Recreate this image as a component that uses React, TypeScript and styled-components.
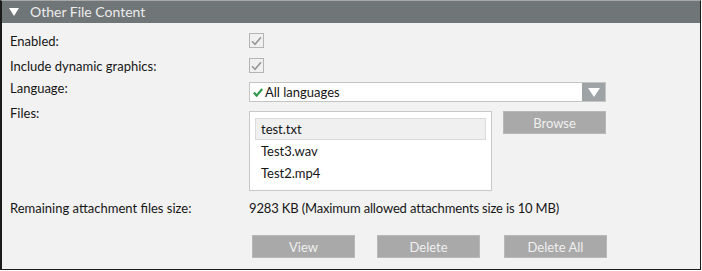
import React from 'react';
import styled, { createGlobalStyle } from 'styled-components';

const GlobalStyle = createGlobalStyle`
  html, body {
    margin: 0;
    padding: 0;
    background: #ffffff;
  }
  body {
    font-family: Lato, "Open Sans", "Liberation Sans", sans-serif;
    font-size: 13px;
    color: #161616;
  }
`;

const files = ['test.txt', 'Test3.wav', 'Test2.mp4'];

export default function App() {
  return (
    <>
      <GlobalStyle />
      <Panel>
        <Header>
          <svg width="10" height="8" viewBox="0 0 10 8">
            <polygon points="0,0 10,0 5,8" fill="#ffffff" />
          </svg>
          <HeaderTitle>Other File Content</HeaderTitle>
        </Header>
        <Body>
          <Row $top={9}>
            <Label>Enabled:</Label>
            <CheckBox>
              <CheckMark />
            </CheckBox>
          </Row>
          <Row $top={7}>
            <Label>Include dynamic graphics:</Label>
            <CheckBox>
              <CheckMark />
            </CheckBox>
          </Row>
          <Row $top={4}>
            <Label>Language:</Label>
            <Select>
              <SelectValue>
                <svg width="10" height="9" viewBox="0 0 10 9">
                  <path d="M0.8 4.6 L3.6 7.6 L9.2 1" stroke="#2f9a4c" strokeWidth="2.2" fill="none" />
                </svg>
                All languages
              </SelectValue>
              <SelectArrow>
                <svg width="12" height="9" viewBox="0 0 12 9">
                  <polygon points="0,0 12,0 6,9" fill="#ffffff" />
                </svg>
              </SelectArrow>
            </Select>
          </Row>
          <Row $top={2}>
            <Label>Files:</Label>
            <FilesArea>
              <FileList>
                {files.map((f, i) => (
                  <FileItem key={f} $selected={i === 0}>
                    {f}
                  </FileItem>
                ))}
              </FileList>
              <GrayButton>Browse</GrayButton>
            </FilesArea>
          </Row>
          <Row $top={8}>
            <Label>Remaining attachment files size:</Label>
            <Value>9283 KB (Maximum allowed attachments size is 10 MB)</Value>
          </Row>
          <ButtonRow>
            <GrayButton>View</GrayButton>
            <GrayButton>Delete</GrayButton>
            <GrayButton $gap={24}>Delete All</GrayButton>
          </ButtonRow>
        </Body>
      </Panel>
    </>
  );
}

function CheckMark() {
  return (
    <svg width="11" height="10" viewBox="0 0 11 10">
      <path d="M1 5.2 L4 8.2 L10 1.2" stroke="#979797" strokeWidth="1.6" fill="none" />
    </svg>
  );
}

const Panel = styled.div`
  width: 701px;
  height: 270px;
  box-sizing: border-box;
  background: #f2f2f2;
  border: 1px solid #1a1a1a;
  border-top: 1px solid #a8a8a8;
  border-left-width: 2px;
  display: flex;
  flex-direction: column;
`;

const Header = styled.div`
  height: 22px;
  background: #707577;
  display: flex;
  align-items: center;
  padding-left: 7px;
  gap: 11px;
  flex-shrink: 0;
`;

const HeaderTitle = styled.span`
  color: #ececec;
  font-size: 14px;
  line-height: 22px;
`;

const Body = styled.div`
  padding-left: 8px;
  display: flex;
  flex-direction: column;
`;

const Row = styled.div<{ $top: number }>`
  display: grid;
  grid-template-columns: 239px auto;
  align-items: start;
  margin-top: ${(p) => p.$top}px;
`;

const Label = styled.div`
  line-height: 18px;
  white-space: nowrap;
`;

const Value = styled.div`
  line-height: 18px;
  white-space: nowrap;
  letter-spacing: -0.15px;
`;

const CheckBox = styled.div`
  width: 15px;
  height: 15px;
  box-sizing: border-box;
  margin-top: 1px;
  border: 1px solid #b4b4b4;
  background: #f0f0f0;
  display: flex;
  align-items: center;
  justify-content: center;
`;

const Select = styled.div`
  margin-top: 3px;
  width: 357px;
  height: 20px;
  box-sizing: border-box;
  border: 1px solid #c4c4c4;
  background: #ffffff;
  display: flex;
`;

const SelectValue = styled.div`
  flex: 1;
  display: flex;
  align-items: center;
  gap: 2px;
  padding-left: 3px;
  font-size: 13px;
`;

const SelectArrow = styled.div`
  width: 23px;
  background: #9ea3a6;
  display: flex;
  align-items: center;
  justify-content: center;
`;

const FilesArea = styled.div`
  margin-top: 7px;
  display: flex;
  align-items: flex-start;
  gap: 11px;
`;

const FileList = styled.div`
  width: 243px;
  height: 80px;
  box-sizing: border-box;
  border: 1px solid #c8c8c8;
  background: #ffffff;
  padding: 6px 5px;
`;

const FileItem = styled.div<{ $selected?: boolean }>`
  height: 22px;
  box-sizing: border-box;
  line-height: 20px;
  padding-left: 5px;
  border: 1px solid ${(p) => (p.$selected ? '#dadada' : 'transparent')};
  background: ${(p) => (p.$selected ? '#f0f0f0' : 'transparent')};
`;

const ButtonRow = styled.div`
  margin-top: 18px;
  margin-left: 242px;
  display: flex;
  gap: 22px;
`;

const GrayButton = styled.div<{ $gap?: number }>`
  width: 103px;
  height: 23px;
  box-sizing: border-box;
  background: #a9a9a9;
  border: 1px solid #b8b8b8;
  color: #f0f0f0;
  font-size: 13px;
  display: flex;
  align-items: center;
  justify-content: center;
  margin-left: ${(p) => (p.$gap ? p.$gap - 22 : 0)}px;
`;
